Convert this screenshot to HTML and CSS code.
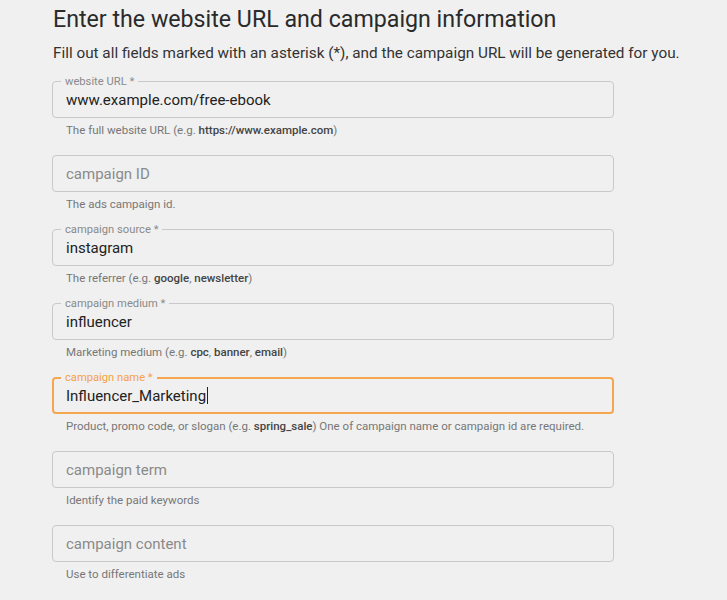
FILE: index.html
```html
<!DOCTYPE html>
<html lang="en">
<head>
<meta charset="utf-8">
<title>Campaign URL Builder</title>
<link rel="stylesheet" href="styles.css">
</head>
<body>
<main class="page">
  <h1 class="title">Enter the website URL and campaign information</h1>
  <p class="intro">Fill out all fields marked with an asterisk (*), and the campaign URL will be generated for you.</p>

  <div class="field">
    <div class="box"><span class="label">website URL *</span><span class="value">www.example.com/free-ebook</span></div>
    <p class="help">The full website URL (e.g. <b>https://www.example.com</b>)</p>
  </div>

  <div class="field">
    <div class="box"><span class="placeholder">campaign ID</span></div>
    <p class="help">The ads campaign id.</p>
  </div>

  <div class="field">
    <div class="box"><span class="label">campaign source *</span><span class="value">instagram</span></div>
    <p class="help">The referrer (e.g. <b>google</b>, <b>newsletter</b>)</p>
  </div>

  <div class="field">
    <div class="box"><span class="label">campaign medium *</span><span class="value">influencer</span></div>
    <p class="help">Marketing medium (e.g. <b>cpc</b>, <b>banner</b>, <b>email</b>)</p>
  </div>

  <div class="field">
    <div class="box focused"><span class="label">campaign name *</span><span class="value">Influencer_Marketing</span><span class="caret"></span></div>
    <p class="help">Product, promo code, or slogan (e.g. <b>spring_sale</b>) One of campaign name or campaign id are required.</p>
  </div>

  <div class="field">
    <div class="box"><span class="placeholder">campaign term</span></div>
    <p class="help">Identify the paid keywords</p>
  </div>

  <div class="field">
    <div class="box"><span class="placeholder">campaign content</span></div>
    <p class="help">Use to differentiate ads</p>
  </div>
</main>
</body>
</html>
```

FILE: styles.css
```css
html, body {
  margin: 0;
  padding: 0;
  background: #f0f0f0;
}

body {
  font-family: Roboto, "Liberation Sans", Arial, sans-serif;
  color: #212121;
}

.page {
  padding: 6px 0 0 53px;
}

.title {
  margin: 0;
  font-size: 23.2px;
  line-height: 26px;
  font-weight: 400;
  color: #2a2a2a;
}

.intro {
  margin: 12px 0 19px 0;
  font-size: 15.3px;
  line-height: 18px;
  color: #333333;
}

.field {
  margin-bottom: 18px;
}

.box {
  position: relative;
  box-sizing: border-box;
  width: 562px;
  height: 37px;
  margin-left: -1px;
  border: 1px solid #c9c9c9;
  border-radius: 4px;
  display: flex;
  align-items: center;
  padding: 0 13px;
}

.box.focused {
  border: 2px solid #f5a64f;
  padding: 0 12px;
}

.label {
  position: absolute;
  top: -7px;
  left: 8px;
  padding: 0 4px;
  background: #f0f0f0;
  font-size: 11.2px;
  line-height: 13px;
  color: #8a8a8a;
}

.box.focused .label {
  top: -8px;
  left: 7px;
  color: #f5a24a;
}

.value {
  font-size: 15px;
  color: #222222;
}

.placeholder {
  font-size: 15px;
  color: #8a8a8a;
}

.caret {
  display: inline-block;
  width: 1px;
  height: 17px;
  margin-left: 1px;
  background: #222222;
}

.help {
  margin: 5px 0 0 13px;
  font-size: 11.5px;
  line-height: 14px;
  color: #777777;
}

.help b {
  font-weight: 500;
  color: #444444;
}
```
